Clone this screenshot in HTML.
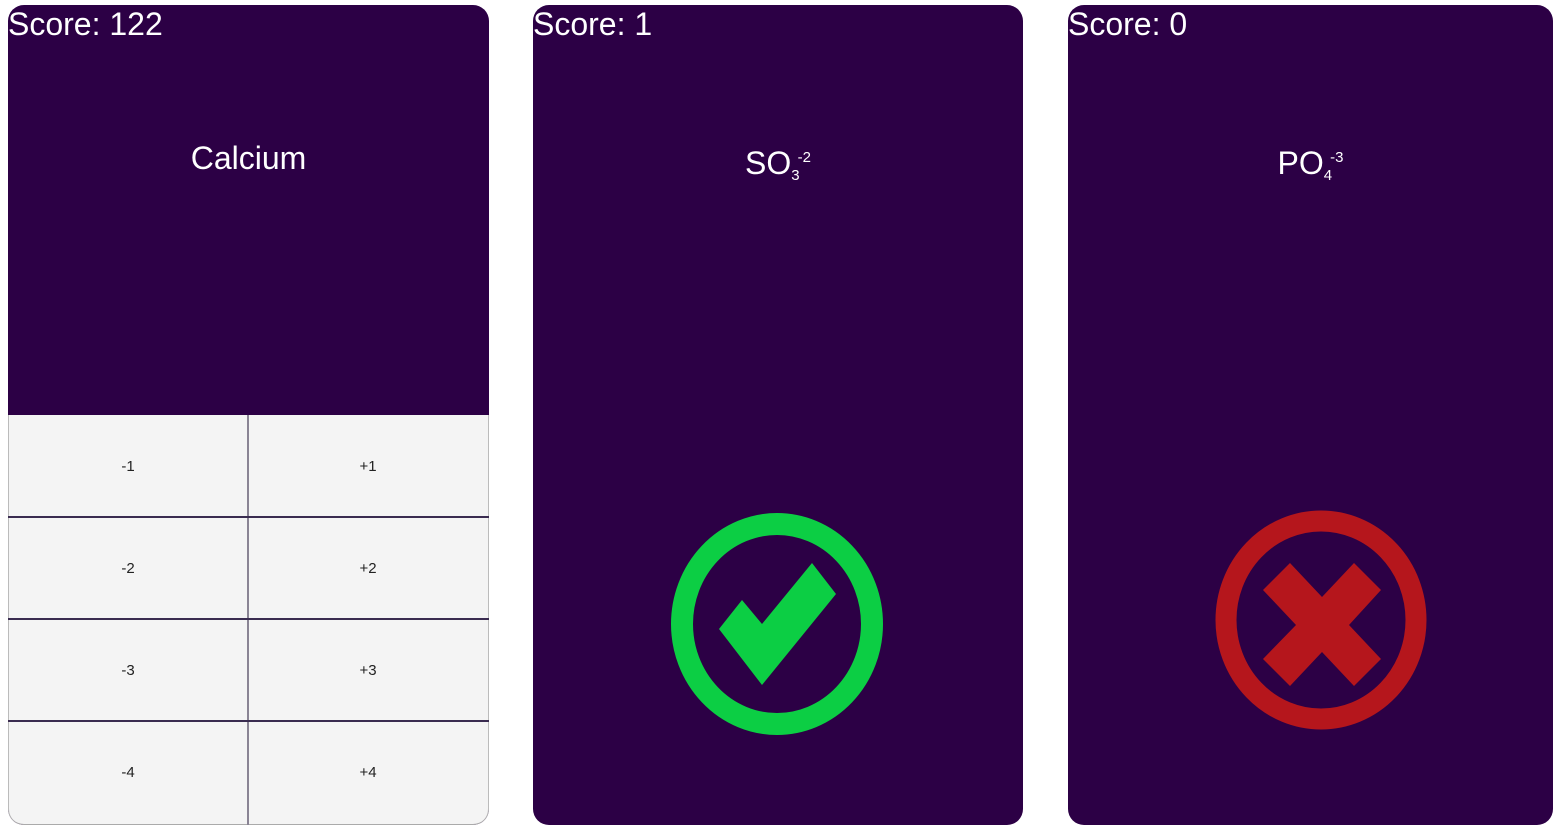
<!DOCTYPE html>
<html><head><meta charset="utf-8"><style>
body{margin:0;width:1558px;height:831px;background:#fff;position:relative;overflow:hidden;font-family:"Liberation Sans",sans-serif}
.card{position:absolute;top:5px;height:820px;background:#2c0045;border-radius:16px;overflow:hidden}
.score{position:absolute;left:0;top:1px;color:#fff;font-size:32px;line-height:36px}
.title{position:absolute;left:0;right:0;top:134px;text-align:center;color:#fff;font-size:32px;line-height:38px}
.title sub,.title sup{font-size:15px}
.title sub{vertical-align:-6px}.title sup{vertical-align:12px;margin-left:-2px}
.grid{position:absolute;left:0;top:410px;width:481px;height:410px;background:#f4f4f4;border-radius:0 0 16px 16px;box-shadow:inset 0 -1px 0 #aaa,inset 1px 0 0 #bbb,inset -1px 0 0 #bbb}
.cell{position:absolute;width:240px;height:102px;display:flex;align-items:center;justify-content:center;font-size:15px;color:#222}
.h{position:absolute;left:0;width:481px;height:2px;background:#3a2c50}
.v{position:absolute;left:239px;top:0;width:2px;height:410px;background:#8a8494}
</style></head><body>
<div class="card" style="left:8px;width:481px">
<div class="score">Score: 122</div>
<div class="title">Calcium</div>
<div class="grid">
<div class="cell" style="left:0;top:0">-1</div><div class="cell" style="left:240px;top:0">+1</div>
<div class="cell" style="left:0;top:102px">-2</div><div class="cell" style="left:240px;top:102px">+2</div>
<div class="cell" style="left:0;top:204px">-3</div><div class="cell" style="left:240px;top:204px">+3</div>
<div class="cell" style="left:0;top:306px">-4</div><div class="cell" style="left:240px;top:306px">+4</div>
<div class="v"></div>
<div class="h" style="top:101px"></div><div class="h" style="top:203px"></div><div class="h" style="top:305px"></div>
</div>
</div>
<div class="card" style="left:533px;width:490px">
<div class="score">Score: 1</div>
<div class="title">SO<sub>3</sub><sup>-2</sup></div>
</div>
<div class="card" style="left:1068px;width:485px">
<div class="score">Score: 0</div>
<div class="title">PO<sub>4</sub><sup>-3</sup></div>
</div>
<svg style="position:absolute;left:0;top:0" width="1558" height="831">
<ellipse cx="777" cy="624" rx="95" ry="100" fill="none" stroke="#0cce44" stroke-width="22"/>
<polygon points="719,629 742,600 762,624 812,563 836,594 762,685" fill="#0cce44"/>
<ellipse cx="1321" cy="620" rx="95" ry="99" fill="none" stroke="#b5161c" stroke-width="21"/>
<polygon points="1263,590 1290,563 1322,597 1354,563 1381,590 1349,625 1381,659 1354,686 1322,652 1290,686 1263,659 1296,625" fill="#b5161c"/>
</svg>
</body></html>
